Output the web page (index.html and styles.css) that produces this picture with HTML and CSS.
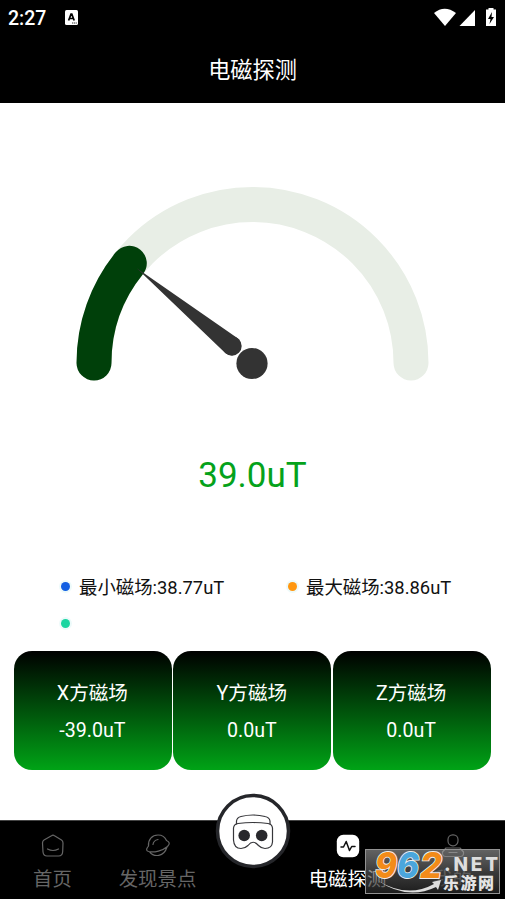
FILE: index.html
```html
<!DOCTYPE html>
<html lang="zh-CN">
<head>
<meta charset="utf-8">
<title>电磁探测</title>
<link rel="stylesheet" href="styles.css">
</head>
<body>
<div class="app">
  <header class="header">
    <div class="status">
      <span class="time">2:27</span>
      <svg class="keyboard" viewBox="0 0 13 15"><rect width="13" height="15" rx="1.5" fill="#fff"/><path d="M3.6 10.5 6 4.2h.8l2.4 6.3M4.5 8.5h3.8" fill="none" stroke="#000" stroke-width="1.7"/><path d="M7 13h5" stroke="#333" stroke-dasharray="1.2 .6"/></svg>
      <svg class="signals" viewBox="0 0 64 20"><g fill="#fff"><path d="M1 6Q11.500-2.500 23 6L12 19Z"/><path d="M42 3v16H26.500Z"/><path d="M53 2.500h2.500V1h5v1.500H63V19H53Z"/></g><path d="m59 5-4 7h2.500l-1 5 4.500-7h-2.500l.5-5Z" fill="#000"/></svg>
    </div>
    <h1 class="title">电磁探测</h1>
  </header>

  <main class="main">
    <svg class="gauge" viewBox="0 0 360 200">
      <g fill="none" stroke-width="35" stroke-linecap="round">
        <path class="track" d="M22 179A158.500 158.500 0 0 1 339 179"/>
        <path class="progress" d="M22 179A158.500 158.500 0 0 1 57.300 79.300"/>
      </g>
      <g fill="#333"><path d="M64.500 84 166 154.500A9.700 9.700 0 0 1 153.500 169.300Z"/><circle cx="160" cy="162" r="9.700"/><circle cx="180" cy="179.500" r="15.600"/></g>
    </svg>
    <div class="reading">39.0uT</div>
    <ul class="legend">
      <li><i class="dot blue"></i><span>最小磁场:38.77uT</span></li>
      <li><i class="dot orange"></i><span>最大磁场:38.86uT</span></li>
      <li><i class="dot green"></i></li>
    </ul>
    <section class="cards">
      <div class="card"><span>X方磁场</span><span>-39.0uT</span></div>
      <div class="card"><span>Y方磁场</span><span>0.0uT</span></div>
      <div class="card"><span>Z方磁场</span><span>0.0uT</span></div>
    </section>
  </main>

  <nav class="nav">
    <a class="tab"><svg class="icon" viewBox="0 0 26 26"><path d="M11.500 2.700Q13 1.700 14.500 2.700L21.500 7Q23 8 23 10L22.700 18.500Q22.500 23 18.500 23H7Q3.500 23 3 19L2.500 10Q2.500 8 4 7ZM7.500 16Q13 19 18.500 16"/></svg><span>首页</span></a>
    <a class="tab"><svg class="icon" viewBox="0 0 26 26"><path d="M3.500 13C3 6.500 7 2 13 2C17 2 20 4 21.500 7.500C25 9 25 11 22.500 13.500C18 17.500 9 20 3.500 18.500C.5 17.500 1.500 15.500 3.500 13M4.500 18.800C9 24.500 19 24 22 14M8 11.500Q8.500 7.500 13 6.500"/></svg><span>发现景点</span></a>
    <a class="vr"><svg viewBox="0 0 76 76"><circle cx="38" cy="38" r="35.500" fill="#fff" stroke="#25262a" stroke-width="3.500"/><g fill="none" stroke="#36363a" stroke-width="1.200"><path d="M21.500 31.500V28Q22 24.500 26 23.500Q38 20.500 50 23.500Q54.500 24.500 55 28V31.500"/><path d="M23 30.500Q38 28.500 53 30.500Q57 31 57.500 35V49Q57 55.500 50 55.500Q46.500 55.500 43.500 52.500Q38 46 33 52.500Q30 55.500 26 55.500Q19 55.500 18.500 47V35Q19 31 23 30.500Z"/></g><g fill="#28282c"><circle cx="29.200" cy="42.500" r="5.800"/><circle cx="46.700" cy="42.500" r="5.800"/></g></svg></a>
    <a class="tab active"><svg class="icon" viewBox="0 0 26 26"><rect x="1.800" y="1.800" width="22.400" height="22.400" rx="6.500" fill="#fff" stroke="none"/><path d="M6 14H8.500L11.200 8.500 14.500 17.500 16.700 13.500H20" stroke="#111" stroke-width="1.500"/></svg><span>电磁探测</span></a>
    <a class="tab"><svg class="icon" viewBox="0 0 26 26"><rect x="8" y="1.800" width="10" height="11" rx="4.700"/><path d="M6 15H20L23.500 19V21Q23 23.500 20.500 23.500H5.500Q3 23.500 2.500 21V19ZM9 19.500h8"/></svg><span>我的</span></a>
  </nav>

  <div class="watermark">
    <svg viewBox="0 0 136 46">
      <defs><linearGradient id="plate" x2="0" y2="1"><stop stop-color="#aaa" stop-opacity=".58"/><stop offset=".55" stop-color="#555" stop-opacity=".65"/><stop offset="1" stop-color="#222" stop-opacity=".8"/></linearGradient></defs>
      <rect x=".5" y=".5" width="134" height="44" fill="url(#plate)" stroke="#929292"/>
      <path d="M12 31Q42 50 69 35L67 33 76 31 73 41 71 38Q42 52 12 31Z" fill="#ddd"/>
      <g class="brand"><text x="10" y="29" textLength="22" lengthAdjust="spacingAndGlyphs" fill="#f28b19">9</text><text x="32" y="29" textLength="22" lengthAdjust="spacingAndGlyphs" fill="#4ba6dc">6</text><text x="55" y="29" textLength="22" lengthAdjust="spacingAndGlyphs" fill="#f28b19">2</text></g>
      <text class="domain" x="79" y="22" textLength="54">.NET</text>
      <text class="site" x="78" y="40" textLength="51">乐游网</text>
    </svg>
  </div>
</div>
</body>
</html>
```
FILE: styles.css
```css
* { box-sizing: border-box; }
body { margin: 0; background: #fff; font-family: Roboto, "Noto Sans CJK SC", sans-serif; }
.app { position: relative; display: flex; flex-direction: column; width: 505px; height: 899px; overflow: hidden; }
.header { height: 103px; background: #000; color: #fff; }
.status { display: flex; align-items: center; height: 35px; padding: 0 8px; }
.time { width: 57px; padding-top: 1px; font-size: 19.5px; font-weight: 500; line-height: 35px; }
.keyboard { width: 13px; height: 15px; }
.signals { width: 64px; height: 20px; margin: -2px 0 0 auto; }
.title { margin: 0; font-size: 22.2px; font-weight: 400; line-height: 70px; text-align: center; }
.main { flex: 1; display: flex; flex-direction: column; }
.gauge { display: block; width: 360px; height: 200px; margin: 81px 0 0 72px; }
.track { stroke: #e8eee6; }
.progress { stroke: #00400a; }
.reading { margin-top: 68px; color: #05a21b; font-size: 35px; line-height: 48px; text-align: center; }
.legend { display: grid; grid-template-columns: 227px 227px; grid-auto-rows: 37px; margin: 68px 0 0 61px; padding: 0; list-style: none; color: #111; font-size: 18.4px; }
.legend li { display: flex; align-items: center; white-space: nowrap; }
.legend span { padding-bottom: 2px; }
.dot { width: 9px; height: 9px; margin-right: 9px; border-radius: 50%; box-shadow: 0 0 0 2px #edfafa; }
.blue { background: #105fe2; }
.orange { background: #ff9710; }
.green { background: #19d5a1; }
.cards { display: grid; grid-template-columns: repeat(3, 1fr); gap: 1.2px; margin: 9px 14.2px 0 13.8px; }
.card { display: flex; flex-direction: column; align-items: center; height: 119px; padding-top: 24px; border-radius: 18px; background: linear-gradient(#000, #00a316); color: #fff; font-size: 19.6px; line-height: 37px; }
.card span { margin-left: -1px; }
.nav { display: grid; grid-template-columns: 105px 105px 85px 105px 105px; height: 79px; border-top: 1px solid #444; background: #000; color: #666; }
.tab { display: flex; flex-direction: column; align-items: center; padding-top: 12px; }
.tab span { margin-top: 5px; font-size: 19.4px; line-height: 32px; white-space: nowrap; }
.active { color: #fff; }
.icon { width: 26px; height: 26px; fill: none; stroke: #666; stroke-width: 1.2; stroke-linejoin: round; stroke-linecap: round; }
.vr { margin: -28px auto 0; width: 76px; height: 76px; }
.vr svg { display: block; width: 76px; height: 76px; }
.watermark { position: absolute; left: 365px; top: 849px; width: 136px; height: 46px; }
.watermark svg { display: block; width: 136px; height: 46px; }
.brand { font: italic 800 35px Inter, "Liberation Sans", sans-serif; stroke: #eee; stroke-width: 1.8; paint-order: stroke; }
.domain { fill: #ddd; font: 800 19px Inter, "Liberation Sans", sans-serif; }
.site { fill: #e4e4e4; font: 900 16px "Noto Sans CJK SC", sans-serif; }
```
